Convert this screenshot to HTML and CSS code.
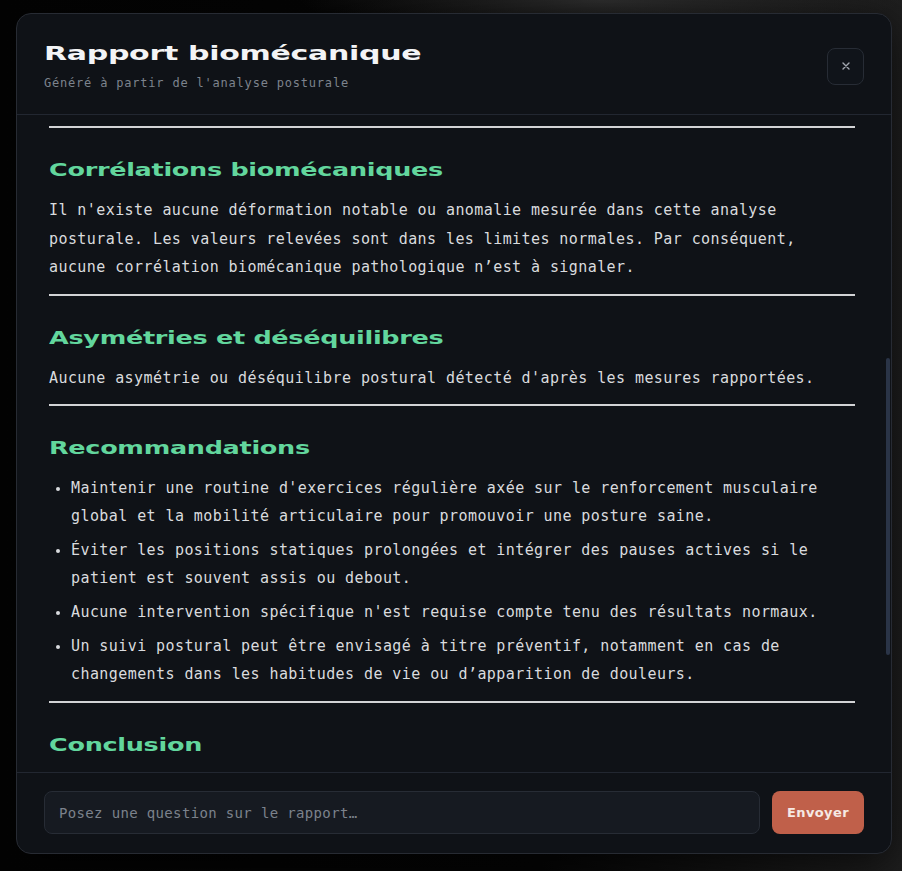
FILE: index.html
```html
<!DOCTYPE html>
<html lang="fr">
<head>
<meta charset="utf-8">
<title>Rapport biomécanique</title>
<link rel="stylesheet" href="styles.css">
</head>
<body>
<div class="backdrop">
  <div class="modal">
    <header class="modal-header">
      <div class="titles">
        <h1 class="title"><span class="wide">Rapport biomécanique</span></h1>
        <p class="subtitle">Généré à partir de l'analyse posturale</p>
      </div>
      <button class="close" type="button" aria-label="Fermer">
        <svg width="10" height="10" viewBox="0 0 10 10"><path d="M2 2 L8 8 M8 2 L2 8" stroke="#a3a8b0" stroke-width="1.4" stroke-linecap="round"/></svg>
      </button>
    </header>
    <main class="modal-body">
      <div class="content">
        <hr class="rule">
        <h2 class="section-title"><span class="wide">Corrélations biomécaniques</span></h2>
        <p class="text">Il n'existe aucune déformation notable ou anomalie mesurée dans cette analyse posturale. Les valeurs relevées sont dans les limites normales. Par conséquent, aucune corrélation biomécanique pathologique n’est à signaler.</p>
        <hr class="rule">
        <h2 class="section-title"><span class="wide">Asymétries et déséquilibres</span></h2>
        <p class="text">Aucune asymétrie ou déséquilibre postural détecté d'après les mesures rapportées.</p>
        <hr class="rule">
        <h2 class="section-title"><span class="wide">Recommandations</span></h2>
        <ul class="list">
          <li>Maintenir une routine d'exercices régulière axée sur le renforcement musculaire global et la mobilité articulaire pour promouvoir une posture saine.</li>
          <li>Éviter les positions statiques prolongées et intégrer des pauses actives si le patient est souvent assis ou debout.</li>
          <li>Aucune intervention spécifique n'est requise compte tenu des résultats normaux.</li>
          <li>Un suivi postural peut être envisagé à titre préventif, notamment en cas de changements dans les habitudes de vie ou d’apparition de douleurs.</li>
        </ul>
        <hr class="rule">
        <h2 class="section-title"><span class="wide">Conclusion</span></h2>
      </div>
      <div class="scroll-thumb"></div>
    </main>
    <footer class="modal-footer">
      <input class="ask" type="text" placeholder="Posez une question sur le rapport…">
      <button class="send" type="button">Envoyer</button>
    </footer>
  </div>
</div>
</body>
</html>
```

FILE: styles.css
```css
* { box-sizing: border-box; }

html, body {
  margin: 0;
  height: 100%;
}

body {
  background:
    radial-gradient(ellipse 300px 40px at 600px 0px, rgba(70,70,70,0.6), rgba(0,0,0,0) 100%),
    linear-gradient(90deg, #030303 0%, #050505 60%, #1e1e1e 100%);
  font-family: "DejaVu Sans Mono", monospace;
  overflow: hidden;
}

.backdrop {
  height: 100%;
  padding: 13px 10px 17px 16px;
  display: flex;
}

.modal {
  flex: 1;
  display: flex;
  flex-direction: column;
  background: #0f1217;
  border: 1px solid #272b33;
  border-radius: 15px;
  overflow: hidden;
  box-shadow: 0 10px 40px rgba(0,0,0,0.6);
}

.modal-header {
  display: flex;
  align-items: center;
  justify-content: space-between;
  padding: 26px 27px 22px 27px;
  border-bottom: 1px solid #222731;
}

.wide {
  display: inline-block;
  transform: scaleX(1.5);
  transform-origin: left center;
  white-space: nowrap;
}

.title {
  margin: 0;
  font-family: "DejaVu Sans", sans-serif;
  font-weight: 700;
  font-size: 20px;
  line-height: 26px;
  color: #f3f4f6;
  letter-spacing: -0.2px;
}

.subtitle {
  margin: 8px 0 0 0;
  font-size: 12px;
  line-height: 18px;
  letter-spacing: 0.8px;
  color: #7d838d;
}

.close {
  width: 37px;
  height: 37px;
  border: 1px solid #272c35;
  border-radius: 8px;
  background: #10141a;
  display: flex;
  align-items: center;
  justify-content: center;
  padding: 0;
}

.modal-body {
  flex: 1;
  position: relative;
  overflow: hidden;
}

.content {
  padding: 11px 36px 0 32px;
}

.rule {
  margin: 0;
  border: 0;
  height: 2px;
  background: #d2d3d5;
}

.section-title {
  margin: 29px 0 13px 0;
  font-family: "DejaVu Sans", sans-serif;
  font-weight: 700;
  font-size: 17px;
  line-height: 26px;
  color: #62d69d;
  letter-spacing: -0.2px;
}

.text {
  margin: 0 0 12px 0;
  font-size: 15px;
  line-height: 28.5px;
  letter-spacing: 0.42px;
  color: #d9dbde;
}

.list {
  margin: 0 0 13px 0;
  padding-left: 22px;
  font-size: 15px;
  line-height: 28px;
  letter-spacing: 0.42px;
  color: #d9dbde;
}

.list li {
  margin-bottom: 6px;
}

.list li:last-child {
  margin-bottom: 0;
}

.list li::marker {
  font-size: 13px;
}

.scroll-thumb {
  position: absolute;
  top: 243px;
  right: 1px;
  width: 4px;
  height: 297px;
  border-radius: 2px;
  background: #2a3447;
}

.modal-footer {
  display: flex;
  gap: 12px;
  padding: 18px 27px 19px 27px;
  border-top: 1px solid #222731;
}

.ask {
  flex: 1;
  height: 43px;
  border: 1px solid #272c35;
  border-radius: 8px;
  background: #161a21;
  padding: 0 14px;
  font-family: "DejaVu Sans Mono", monospace;
  font-size: 14px;
  letter-spacing: 0.35px;
  color: #d9dbde;
  outline: none;
}

.ask::placeholder {
  color: #7c828c;
}

.send {
  width: 92px;
  height: 43px;
  border: 0;
  border-radius: 8px;
  background: #c0604a;
  color: #f6e9e4;
  font-family: "DejaVu Sans", sans-serif;
  font-weight: 700;
  font-size: 13px;
  letter-spacing: 0.4px;
  padding: 0;
}
```
